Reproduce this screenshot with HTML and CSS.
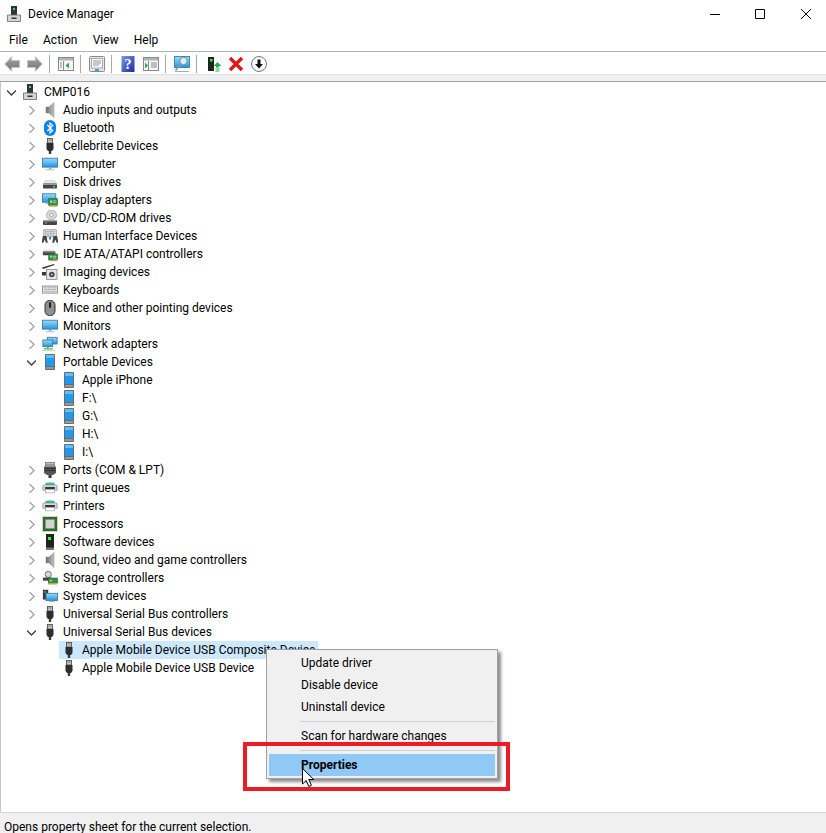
FILE: index.html
```html
<!DOCTYPE html>
<html lang="en">
<head>
    <meta charset="UTF-8">
    <title>Device Manager</title>
    <link rel="stylesheet" href="styles.css">
</head>
<body>

<svg class="sprite" width="0" height="0">
    <defs>
        <linearGradient id="screen" x1="0" y1="0" x2="0" y2="1"><stop offset="0" stop-color="#9adcf8"/><stop offset="1" stop-color="#1e96e6"/></linearGradient>
        <linearGradient id="metal" x1="0" y1="0" x2="1" y2="0"><stop offset="0" stop-color="#6e6e6e"/><stop offset="1" stop-color="#c4c4c4"/></linearGradient>
        <linearGradient id="arrow" x1="0" y1="0" x2="0" y2="1"><stop offset="0" stop-color="#a8a8a8"/><stop offset="1" stop-color="#707070"/></linearGradient>
        <linearGradient id="helpblue" x1="0" y1="0" x2="1" y2="1"><stop offset="0" stop-color="#7f94ea"/><stop offset="1" stop-color="#1c2f9c"/></linearGradient>
        <symbol id="c-closed" viewBox="0 0 9 9"><path d="M2.500 0l4.500 4.500L2.500 9" fill="none" stroke="#a6a6a6" stroke-width="1.400"/></symbol>
        <symbol id="c-open" viewBox="0 0 9 9"><path d="M0 2.500l4.500 4.500L9 2.500" fill="none" stroke="#404040" stroke-width="1.400"/></symbol>
        <symbol id="i-tower" viewBox="0 0 16 16"><path d="M5 0h6v9H5z" fill="#333"/><rect x="7" y="2" width="2" height="2" fill="#39e04a"/><path d="M1.500 9h13v6.500h-13z" fill="#d4d4d4" stroke="#666" stroke-width=".8"/><rect x="5.500" y="11.500" width="5" height="1.500" fill="#333"/></symbol>
        <symbol id="i-audio" viewBox="0 0 16 16"><path d="M4 5h3l5-4.500v15l-5-4.500H4z" fill="url(#metal)" stroke="#8a8a8a" stroke-width=".5"/></symbol>
        <symbol id="i-bt" viewBox="0 0 16 16"><rect x="2" y="0" width="12" height="16" rx="6" fill="#0f80f0"/><path d="M5.300 5l5.400 5.500L8 13V3l2.700 2.500L5.300 11" fill="none" stroke="#fff" stroke-width="1.100"/></symbol>
        <symbol id="i-usb" viewBox="0 0 16 16"><rect x="5.500" y="0.500" width="5" height="4.500" fill="#c4c4c4" stroke="#444" stroke-width=".8"/><path d="M6.800 2h.8M8.400 2h.8" stroke="#222" stroke-width=".8"/><path d="M4.500 5h7v6l-1.500 2H6l-1.500-2z" fill="#2e2e2e"/><rect x="6.800" y="13" width="2.400" height="3" fill="#3a3a3a"/></symbol>
        <symbol id="i-monitor" viewBox="-1 0 18 16"><rect x="-.5" y="1.500" width="17" height="10" fill="url(#screen)" stroke="#3f7a9c"/><path d="M6.500 12h3v1.500h-3z" fill="#8fa0aa"/><path d="M3 14h10v1H3z" fill="#a8b4bc"/></symbol>
        <symbol id="i-disk" viewBox="0 0 16 16"><path d="M2 9.500l1.500-3h9l1.500 3z" fill="#e8e8e8" stroke="#aaa" stroke-width=".4"/><rect x="1" y="9.500" width="14" height="5" rx="1" fill="#454545"/><rect x="1" y="9.500" width="14" height="1.500" fill="#9a9a9a"/><rect x="11" y="12" width="2" height="1.500" fill="#3be04f"/></symbol>
        <symbol id="i-display" viewBox="-1 0 18 16"><rect x="-.5" y="1" width="15" height="9.500" fill="url(#screen)" stroke="#3f7a9c"/><path d="M3 11h7v1.500H3z" fill="#a8b4bc"/><rect x="6.500" y="6.500" width="10" height="7.500" fill="#2f8f4c" stroke="#1f5f32" stroke-width=".6"/><path d="M8 8.500h2.500V11H8zM11.500 8.500h3.500v1h-3.500zM11.500 10.500h3.500v1h-3.500z" fill="#b8d8a8"/><path d="M7 14h9v1.500H7z" fill="#c6a43c"/></symbol>
        <symbol id="i-dvd" viewBox="0 0 16 16"><circle cx="9.500" cy="5" r="5" fill="#d8d8d8" stroke="#9c9c9c" stroke-width=".7"/><circle cx="9.500" cy="5" r="1.700" fill="#fff" stroke="#888" stroke-width=".7"/><rect x="1" y="10" width="14" height="5" rx="1" fill="#454545"/><rect x="1" y="10" width="14" height="1.500" fill="#a0a0a0"/><rect x="3" y="12.500" width="2" height="1" fill="#3be04f"/></symbol>
        <symbol id="i-hid" viewBox="-1 0 18 16"><rect x="1" y="1" width="14" height="8" fill="#dcdcdc" stroke="#808080" stroke-width=".7"/><path d="M2.500 3h11M2.500 5h11M2.500 7h11" stroke="#8c8c8c" stroke-dasharray="1 .8"/><path d="M0 8h4l1.500 7.500h-2L2 12 .5 15.500h-2zM12 8h4l1.500 7.500h-2L14 12l-1.500 3.500h-2z" fill="#3f4650"/><rect x="7" y="9" width="2" height="3" fill="#2a76c8"/></symbol>
        <symbol id="i-ide" viewBox="-1 0 18 16"><path d="M1 3h11l1 2H0z" fill="#e6e6e6"/><rect x="0" y="5" width="14" height="4.500" rx="1" fill="#454545"/><rect x="0" y="5" width="14" height="1.300" fill="#9a9a9a"/><rect x="6.500" y="8" width="10" height="6.500" fill="#2f8f4c" stroke="#1f5f32" stroke-width=".6"/><path d="M8 10h2.500v2H8zM11.500 10h3.500v1h-3.500zM11.500 12h3.500v1h-3.500z" fill="#b8d8a8"/><path d="M7 14.500h9V16H7z" fill="#c6a43c"/></symbol>
        <symbol id="i-camera" viewBox="0 0 16 16"><path d="M0 3.500L12 0l.5 1L1 5z" fill="#333"/><path d="M0 8h4v3.500H0z" fill="#3a3a3a"/><rect x="4.500" y="5.500" width="10.500" height="10" fill="#e6e6e6" stroke="#777" stroke-width=".7"/><circle cx="9.800" cy="10.500" r="2.800" fill="#444"/><circle cx="9.800" cy="10.500" r="1" fill="#c8ccd8"/></symbol>
        <symbol id="i-keyboard" viewBox="-1 0 18 16"><rect x="-.5" y="3.500" width="17" height="8" fill="#e4e4e4" stroke="#8c8c8c"/><path d="M1 5.500h14M1 7.500h14M2 9.500h12" stroke="#9a9a9a" stroke-dasharray="1 .6"/></symbol>
        <symbol id="i-mouse" viewBox="0 0 16 16"><rect x="3" y=".5" width="10" height="15" rx="4.500" fill="#8e9094" stroke="#333"/><rect x="7" y="2" width="2" height="6" rx="1" fill="#222"/></symbol>
        <symbol id="i-network" viewBox="-1 0 18 16"><rect x="5" y="0.500" width="11" height="7.500" fill="url(#screen)" stroke="#3f7a9c"/><rect x="0" y="3.500" width="11" height="7.500" fill="url(#screen)" stroke="#3f7a9c"/><path d="M4.500 11h2v2h-2z" fill="#48b04a"/><path d="M1 13.500h10" stroke="#53c050" stroke-width="1.500"/><path d="M-1 15.500h15" stroke="#c8c8c8"/></symbol>
        <symbol id="i-portable" viewBox="0 0 16 16"><rect x="3" y="0" width="10" height="16" rx="1" fill="#6a6a6a"/><rect x="4" y="1" width="8" height="11" fill="#1e9af0"/><rect x="4" y="1" width="8" height="3" fill="#62bff5"/><rect x="4" y="13" width="8" height="2" fill="#9a9a9a"/></symbol>
        <symbol id="i-port" viewBox="0 0 16 16"><rect x="3.500" y="0.500" width="9" height="3.500" fill="#ddd" stroke="#666" stroke-width=".7"/><path d="M5 1.500v2M7 1.500v2M9 1.500v2M11 1.500v2" stroke="#333" stroke-width=".8"/><path d="M2 4.500h12v6.500l-3 2H5l-3-2z" fill="#555"/><path d="M3 6.500h10M3 8.500h10" stroke="#333"/><rect x="6.500" y="13" width="3" height="3" fill="#333"/></symbol>
        <symbol id="i-printer" viewBox="-1 0 18 16"><path d="M3 2h10v3H3z" fill="#2fb0d8"/><path d="M6 2h4v3H6z" fill="#3dcc70"/><path d="M0 5.500L2 4.500h12l2 1v5h-16z" fill="#d8d8d8" stroke="#777" stroke-width=".7"/><rect x="2.500" y="7" width="11" height="2" fill="#222"/><rect x="3" y="10" width="10" height="3.500" fill="#fff" stroke="#888" stroke-width=".6"/></symbol>
        <symbol id="i-cpu" viewBox="0 0 16 16"><rect x="1" y="1" width="14" height="14" fill="#256c3c"/><rect x=".5" y=".5" width="15" height="15" fill="none" stroke="#c8a438" stroke-dasharray="1 1"/><rect x="3.500" y="3.500" width="9" height="9" fill="#d4d4cc" stroke="#8a8a80" stroke-width=".6"/></symbol>
        <symbol id="i-software" viewBox="0 0 16 16"><rect x="4" y="0" width="8" height="16" fill="#222"/><rect x="6" y="3" width="3" height="3" fill="#3cf04c"/><path d="M4 13.500h8V16H4z" fill="#777"/></symbol>
        <symbol id="i-storage" viewBox="-1 0 18 16"><circle cx="6" cy="4" r="3.500" fill="#d8d8d8" stroke="#555" stroke-width=".9"/><path d="M0 7.500h10V11H0z" fill="#444"/><rect x="6" y="8" width="10.500" height="6" fill="#2f8f4c" stroke="#1f5f32" stroke-width=".6"/><path d="M8 10h2v2H8z" fill="#b8d8a8"/><path d="M6 14h10v1.500H6z" fill="#e0b830"/></symbol>
        <symbol id="i-system" viewBox="-1 0 18 16"><path d="M0 1h6v11H0z" fill="#3a3a3a"/><rect x="1" y="3" width="3" height="1" fill="#3be04f"/><rect x="3.500" y="5" width="13" height="8" fill="url(#screen)" stroke="#3f7a9c"/><path d="M7 13.500h6V15H7z" fill="#a8b4bc"/></symbol>
    </defs>
</svg>

<div class="window">
    <div class="titlebar">
        <svg class="app-icon"><use href="#i-tower"/></svg>
        <span class="title">Device Manager</span>
        <div class="controls">
            <svg class="ctl" viewBox="0 0 10 10"><path d="M0 5.500h10" stroke="#000" fill="none"/></svg>
            <svg class="ctl ctl-max" viewBox="0 0 10 10"><path d="M.5.500h9v9h-9z" stroke="#000" fill="none"/></svg>
            <svg class="ctl" viewBox="0 0 10 10"><path d="M0 0l10 10M10 0L0 10" stroke="#000" fill="none"/></svg>
        </div>
    </div>

    <div class="menubar">
        <span class="menu-item">File</span>
        <span class="menu-item">Action</span>
        <span class="menu-item">View</span>
        <span class="menu-item">Help</span>
    </div>

    <div class="toolbar">
        <svg class="tool tool-next" viewBox="0 0 16 16"><path d="M.7 8l7-7.300v3.800h7.800v7H7.700v3.800z" fill="url(#arrow)" stroke="#c4c4c4"/></svg>
        <svg class="tool" viewBox="0 0 16 16"><path d="M15.300 8l-7-7.300v3.800H.5v7h7.800v3.800z" fill="url(#arrow)" stroke="#c4c4c4"/></svg>
        <i class="sep"></i>
        <svg class="tool" viewBox="0 0 16 16"><rect x=".5" y="1.500" width="15" height="13" fill="#f6f6f6" stroke="#8a8a8a"/><rect x="1" y="2" width="14" height="2.500" fill="#aeb4ba"/><path d="M5.500 5v9" stroke="#8a8a8a"/><path d="M2 7h2M2 9h2M2 11h2" stroke="#888"/><path d="M11 6.500v6L7.500 9.500z" fill="#2ea84a"/></svg>
        <i class="sep"></i>
        <svg class="tool" viewBox="0 0 16 16"><rect x=".5" y=".5" width="15" height="15" rx="1" fill="#e8e8e8" stroke="#8a8a8a"/><rect x="2.500" y="2.500" width="11" height="9.500" fill="#fafafa" stroke="#aaa"/><path d="M4 5h8M4 7h8M4 9h6" stroke="#8a9aa8"/><rect x="6" y="13" width="4" height="2" fill="#35a0e8"/></svg>
        <i class="sep"></i>
        <svg class="tool tool-next" viewBox="0 0 16 16"><rect x="1.500" y="0" width="13" height="16" fill="url(#helpblue)"/><text x="8" y="13" class="help-mark">?</text></svg>
        <svg class="tool" viewBox="0 0 16 16"><rect x=".5" y="1.500" width="15" height="13" fill="#f6f6f6" stroke="#8a8a8a"/><rect x="1" y="2" width="14" height="2.500" fill="#aeb4ba"/><path d="M5.500 5v9" stroke="#8a8a8a"/><path d="M2 6.500v6l3-3z" fill="#2ea84a"/><path d="M8 7h6M8 9h6M8 11h6" stroke="#888"/></svg>
        <i class="sep"></i>
        <svg class="tool" viewBox="0 0 16 16"><rect x=".5" y=".5" width="15" height="11" fill="url(#screen)" stroke="#3f8ab0"/><circle cx="9.500" cy="5" r="3.700" fill="#d8eefa" stroke="#7a8a94"/><path d="M7 8l-5.500 6.500" stroke="#8a9aa4" stroke-width="1.600"/><path d="M1 15.500h14" stroke="#9cb2c0"/></svg>
        <i class="sep"></i>
        <svg class="tool tool-wide" viewBox="0 0 16 16"><path d="M2 1h6v14H2z" fill="#222"/><rect x="4" y="3" width="2.500" height="2.500" fill="#3cf04c"/><path d="M11.500 6l4 4h-2.500v1.500h-3V10H7.500z" fill="#22b04a"/><path d="M9.500 13h4M9.500 15h4" stroke="#22b04a" stroke-width="1.200"/></svg>
        <svg class="tool tool-next" viewBox="0 0 16 16"><path d="M2 2l12 12M14 2L2 14" stroke="#e01818" stroke-width="3.400"/></svg>
        <svg class="tool" viewBox="0 0 16 16"><circle cx="8" cy="8" r="7.500" fill="#fafafa" stroke="#777"/><path d="M6.500 3.500h3V8H12l-4 4.500L4 8h2.500z" fill="#111"/></svg>
    </div>
    <div class="toolbar-band"></div>

    <div class="tree">
        <div class="row root"><svg class="chev"><use href="#c-open"/></svg><svg class="icon"><use href="#i-tower"/></svg><span class="label">CMP016</span></div>
        <div class="row"><svg class="chev"><use href="#c-closed"/></svg><svg class="icon"><use href="#i-audio"/></svg><span class="label">Audio inputs and outputs</span></div>
        <div class="row"><svg class="chev"><use href="#c-closed"/></svg><svg class="icon"><use href="#i-bt"/></svg><span class="label">Bluetooth</span></div>
        <div class="row"><svg class="chev"><use href="#c-closed"/></svg><svg class="icon"><use href="#i-usb"/></svg><span class="label">Cellebrite Devices</span></div>
        <div class="row"><svg class="chev"><use href="#c-closed"/></svg><svg class="icon"><use href="#i-monitor"/></svg><span class="label">Computer</span></div>
        <div class="row"><svg class="chev"><use href="#c-closed"/></svg><svg class="icon"><use href="#i-disk"/></svg><span class="label">Disk drives</span></div>
        <div class="row"><svg class="chev"><use href="#c-closed"/></svg><svg class="icon"><use href="#i-display"/></svg><span class="label">Display adapters</span></div>
        <div class="row"><svg class="chev"><use href="#c-closed"/></svg><svg class="icon"><use href="#i-dvd"/></svg><span class="label">DVD/CD-ROM drives</span></div>
        <div class="row"><svg class="chev"><use href="#c-closed"/></svg><svg class="icon"><use href="#i-hid"/></svg><span class="label">Human Interface Devices</span></div>
        <div class="row"><svg class="chev"><use href="#c-closed"/></svg><svg class="icon"><use href="#i-ide"/></svg><span class="label">IDE ATA/ATAPI controllers</span></div>
        <div class="row"><svg class="chev"><use href="#c-closed"/></svg><svg class="icon"><use href="#i-camera"/></svg><span class="label">Imaging devices</span></div>
        <div class="row"><svg class="chev"><use href="#c-closed"/></svg><svg class="icon"><use href="#i-keyboard"/></svg><span class="label">Keyboards</span></div>
        <div class="row"><svg class="chev"><use href="#c-closed"/></svg><svg class="icon"><use href="#i-mouse"/></svg><span class="label">Mice and other pointing devices</span></div>
        <div class="row"><svg class="chev"><use href="#c-closed"/></svg><svg class="icon"><use href="#i-monitor"/></svg><span class="label">Monitors</span></div>
        <div class="row"><svg class="chev"><use href="#c-closed"/></svg><svg class="icon"><use href="#i-network"/></svg><span class="label">Network adapters</span></div>
        <div class="row"><svg class="chev"><use href="#c-open"/></svg><svg class="icon"><use href="#i-portable"/></svg><span class="label">Portable Devices</span></div>
        <div class="row child"><svg class="icon"><use href="#i-portable"/></svg><span class="label">Apple iPhone</span></div>
        <div class="row child"><svg class="icon"><use href="#i-portable"/></svg><span class="label">F:\</span></div>
        <div class="row child"><svg class="icon"><use href="#i-portable"/></svg><span class="label">G:\</span></div>
        <div class="row child"><svg class="icon"><use href="#i-portable"/></svg><span class="label">H:\</span></div>
        <div class="row child"><svg class="icon"><use href="#i-portable"/></svg><span class="label">I:\</span></div>
        <div class="row"><svg class="chev"><use href="#c-closed"/></svg><svg class="icon"><use href="#i-port"/></svg><span class="label">Ports (COM &amp; LPT)</span></div>
        <div class="row"><svg class="chev"><use href="#c-closed"/></svg><svg class="icon"><use href="#i-printer"/></svg><span class="label">Print queues</span></div>
        <div class="row"><svg class="chev"><use href="#c-closed"/></svg><svg class="icon"><use href="#i-printer"/></svg><span class="label">Printers</span></div>
        <div class="row"><svg class="chev"><use href="#c-closed"/></svg><svg class="icon"><use href="#i-cpu"/></svg><span class="label">Processors</span></div>
        <div class="row"><svg class="chev"><use href="#c-closed"/></svg><svg class="icon"><use href="#i-software"/></svg><span class="label">Software devices</span></div>
        <div class="row"><svg class="chev"><use href="#c-closed"/></svg><svg class="icon"><use href="#i-audio"/></svg><span class="label">Sound, video and game controllers</span></div>
        <div class="row"><svg class="chev"><use href="#c-closed"/></svg><svg class="icon"><use href="#i-storage"/></svg><span class="label">Storage controllers</span></div>
        <div class="row"><svg class="chev"><use href="#c-closed"/></svg><svg class="icon"><use href="#i-system"/></svg><span class="label">System devices</span></div>
        <div class="row"><svg class="chev"><use href="#c-closed"/></svg><svg class="icon"><use href="#i-usb"/></svg><span class="label">Universal Serial Bus controllers</span></div>
        <div class="row"><svg class="chev"><use href="#c-open"/></svg><svg class="icon"><use href="#i-usb"/></svg><span class="label">Universal Serial Bus devices</span></div>
        <div class="row child"><span class="selected"><svg class="icon"><use href="#i-usb"/></svg><span class="label">Apple Mobile Device USB Composite Device</span></span></div>
        <div class="row child"><svg class="icon"><use href="#i-usb"/></svg><span class="label">Apple Mobile Device USB Device</span></div>
    </div>

    <div class="statusbar">Opens property sheet for the current selection.</div>
</div>

<div class="context-menu">
    <div class="ctx-item">Update driver</div>
    <div class="ctx-item">Disable device</div>
    <div class="ctx-item">Uninstall device</div>
    <div class="ctx-sep"></div>
    <div class="ctx-item">Scan for hardware changes</div>
    <div class="ctx-sep"></div>
    <div class="ctx-item active">Properties</div>
</div>
<div class="callout"></div>
<svg class="pointer" viewBox="0 0 12 20"><path d="M.5.500v15.500l3.700-3.500 2.600 6 2.600-1.100-2.600-5.900h5z" fill="#fff" stroke="#000"/></svg>

</body>
</html>
```

FILE: styles.css
```css
* {
    box-sizing: border-box;
}

body {
    margin: 0;
    font-family: Roboto, "Noto Sans", sans-serif;
    font-size: 12px;
    color: #000;
    background: #fff;
    overflow: hidden;
}

.sprite {
    display: block;
    width: 0;
    height: 0;
}

.window {
    display: flex;
    flex-direction: column;
    height: 833px;
}

/* Title bar */
.titlebar {
    display: flex;
    align-items: center;
    height: 29px;
    padding: 0 15px 2px 6px;
}

.app-icon {
    width: 16px;
    height: 16px;
}

.title {
    margin-left: 6px;
}

.controls {
    display: flex;
    gap: 35px;
    margin-left: auto;
}

.ctl {
    width: 10px;
    height: 10px;
}

.ctl-max {
    margin-right: 1px;
}

/* Menu */
.menubar {
    display: flex;
    align-items: center;
    height: 23px;
    padding-left: 1.400px;
    border-bottom: 1px solid #b0b4bc;
}

.menu-item {
    padding: 0 7.600px;
}

/* Toolbar */
.toolbar {
    display: flex;
    align-items: center;
    height: 22px;
    padding: 2px 0 0 4px;
}

.tool {
    width: 16px;
    height: 16px;
    margin-right: 6px;
}

.tool-next {
    margin-right: 7px;
}

.tool-wide {
    margin-left: 1px;
}

.sep {
    width: 1px;
    height: 18px;
    margin-right: 8px;
    background: #a8a8a8;
}

.help-mark {
    font-family: "Liberation Serif", serif;
    font-size: 14px;
    font-weight: bold;
    fill: #fff;
    text-anchor: middle;
}

.toolbar-band {
    height: 8px;
    background: #f0f0f0;
    border-top: 1px solid #e2e2e2;
    border-bottom: 1px solid #a0a0a0;
}

/* Device tree */
.tree {
    flex: 1;
    padding: 1px 0 0 6px;
    border-left: 1px solid #c8c8c8;
}

.row {
    display: flex;
    align-items: center;
    height: 18px;
    padding-left: 20px;
    white-space: nowrap;
}

.row.root {
    padding-left: 0;
}

.row.root .label {
    margin-left: 1px;
}

.row.child {
    padding-left: 52px;
}

.row.child .icon {
    margin-left: 2px;
}

.chev {
    flex: none;
    width: 9px;
    height: 9px;
    margin-right: 6px;
}

.icon {
    flex: none;
    width: 16px;
    height: 16px;
    margin-right: 5px;
}

.selected {
    display: flex;
    align-items: center;
    width: 259px;
    height: 18px;
    background: #cce8ff;
}

/* Status bar */
.statusbar {
    height: 21px;
    padding: 8px 0 0 4px;
    line-height: 12px;
    background: #f0f0f0;
    border-top: 1px solid #d8d8d8;
}

/* Overlays */
.context-menu {
    position: absolute;
    left: 266px;
    top: 649px;
    width: 232px;
    padding: 2px;
    background: #f0f0f0;
    border: 1px solid #a0a0a0;
    box-shadow: 3px 3px 3px rgba(0, 0, 0, 0.45);
}

.ctx-item {
    height: 22px;
    padding-left: 32px;
    line-height: 23px;
}

.ctx-item.active {
    font-weight: bold;
    background: #90c8f6;
}

.ctx-sep {
    height: 1px;
    margin: 3px 0 3px 31px;
    background: #d0d0d0;
}

.callout {
    position: absolute;
    left: 243px;
    top: 742px;
    width: 267px;
    height: 49px;
    border: 4px solid #ed1c24;
}

.pointer {
    position: absolute;
    left: 302px;
    top: 768px;
    width: 12px;
    height: 20px;
}
```
